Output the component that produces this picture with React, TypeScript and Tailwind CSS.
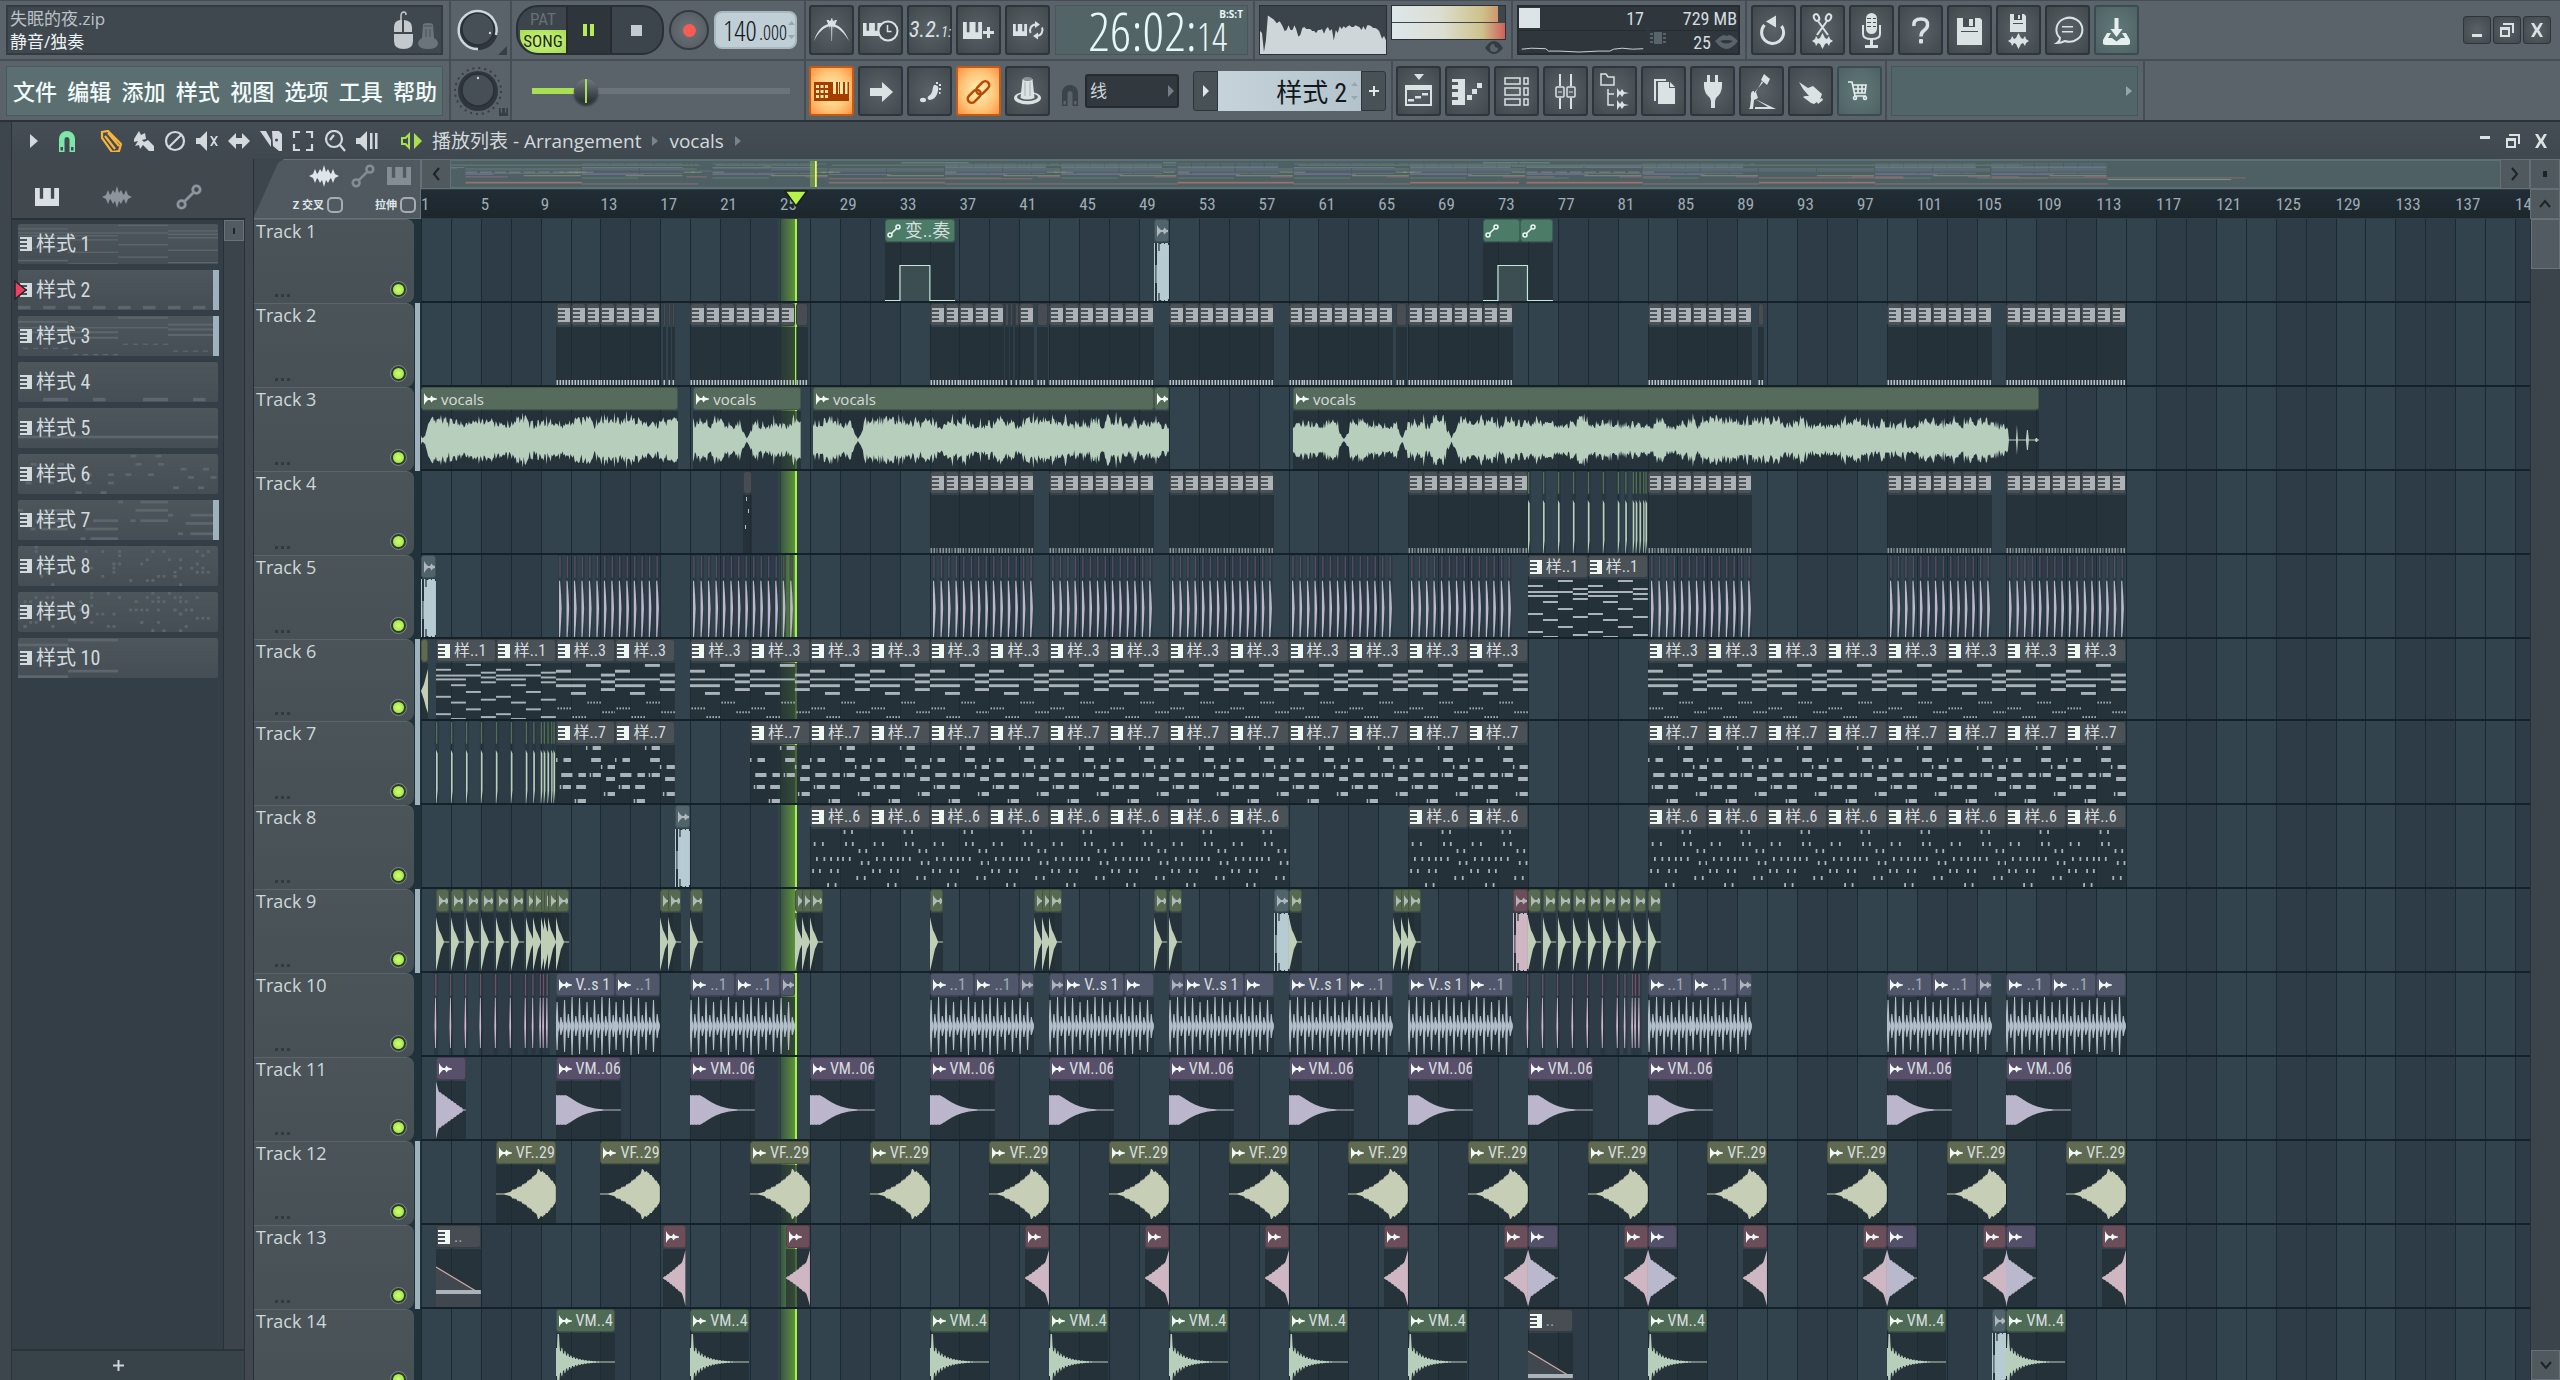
import type { ReactNode } from "react";

/* ------------------------------------------------------------------ */
/* helpers                                                             */
/* ------------------------------------------------------------------ */

const BARS = 141; // bars visible in the playlist
const PX = 15; // drawing units per bar inside the clip svgs
const BODY = 58; // drawing height of a clip body

const NARROW = "[font-family:'Roboto_Condensed',Roboto,'Noto_Sans_CJK_SC',sans-serif]";
const THIN = "[font-family:'Open_Sans_Condensed_Light','Roboto_Condensed','Noto_Sans_CJK_SC',sans-serif]";

const pct = (bars: number) => `${(bars / BARS) * 100}%`;
const steps = (from: number, count: number, by: number) => Array.from({ length: count }, (_, i) => from + i * by);

function noise(seed: number) {
  let s = seed * 9301 + 49297;
  return () => {
    s = (s * 1103515245 + 12345) % 2147483648;
    return s / 2147483648;
  };
}

/** Mirrored envelope: half(x) is half the height at x. */
function envelope(width: number, half: (x: number) => number) {
  const top: string[] = [];
  const bottom: string[] = [];
  for (let x = 0; x <= width; x++) {
    const h = Math.max(0.5, half(x));
    top.push(`${x} ${(BODY / 2 - h).toFixed(1)}`);
    bottom.unshift(`${x} ${(BODY / 2 + h).toFixed(1)}`);
  }
  return `M${top.join("L")}L${bottom.join("L")}Z`;
}

/* ------------------------------------------------------------------ */
/* clip model                                                          */
/* ------------------------------------------------------------------ */

type Tone = "pattern" | "dim" | "auto" | "vocal" | "blue" | "kick" | "drum" | "violet" | "olive" | "rose" | "lilac" | "green";

const HEAD: Record<Tone, string> = {
  pattern: "bg-[#4a5157] border-[#393f44]",
  dim: "bg-[#474d52] border-[#363c41]",
  auto: "bg-[#4a7c67] border-[#3a6352]",
  vocal: "bg-[#566b5b] border-[#44584a]",
  blue: "bg-[#51646b] border-[#3f5058]",
  kick: "bg-[#566a51] border-[#45553f]",
  drum: "bg-[#50576a] border-[#3f4556]",
  violet: "bg-[#58506a] border-[#463f56]",
  olive: "bg-[#5f6a50] border-[#4c553e]",
  rose: "bg-[#6a4f5a] border-[#573f49]",
  lilac: "bg-[#53506a] border-[#424056]",
  green: "bg-[#4f6b56] border-[#3e5645]",
};

const WAVE: Record<Tone, string> = {
  pattern: "fill-[#a9b3b9]",
  dim: "fill-[#a9b3b9]",
  auto: "fill-[#c3e3d5]",
  vocal: "fill-[#b7cebd]",
  blue: "fill-[#b7cbd2]",
  kick: "fill-[#bfceb6]",
  drum: "fill-[#b3becb]",
  violet: "fill-[#bcb6cd]",
  olive: "fill-[#c6ceb5]",
  rose: "fill-[#ceb7c2]",
  lilac: "fill-[#bab8cd]",
  green: "fill-[#b7cfba]",
};

interface ClipData {
  at: number;
  len: number;
  tone: Tone;
  label?: string;
  icon?: "keys" | "wave" | "link" | "none";
  faded?: boolean;
  body?: ReactNode;
}

/* note = [start bar, end bar, y, height] */
type Note = [number, number, number, number];

const NOTES_1: Note[] = [
  [2, 3, 1, 2], [0, 1, 6, 2], [3, 4, 9, 2], [0, 3, 12, 2], [3, 4, 14, 2], [0, 2, 16, 2], [3, 4, 19, 2], [1, 2, 22, 2],
  [2, 3, 29, 2], [0, 1, 34, 2], [3, 4, 37, 2], [1, 2, 40, 2], [2, 3, 47, 2], [0, 1, 52, 2], [3, 4, 55, 2], [1, 2, 57, 2],
];
const dots = (from: number, y: number): Note[] => steps(from, 5, 0.2).map((x) => [x, x + 0.1, y, 2]);
const NOTES_3: Note[] = [
  [2, 3, 1, 3], [0, 1, 7, 3], [3, 4, 11, 3], [0, 3, 16, 2], [3, 4, 18, 3], [0, 2, 22, 3], [3, 4, 26, 3], [1, 2, 30, 3],
  ...dots(2.1, 40), ...dots(0.1, 46), ...dots(3.1, 50), ...dots(1.1, 55),
];
const NOTES_7: Note[] = [
  [2, 2.1, 1, 4], [2.45, 3, 1, 4], [0, 0.1, 13, 4], [0.5, 1, 13, 4], [2.35, 3, 13, 4], [3, 3.1, 20, 4], [3.45, 4, 20, 4],
  [0.35, 1.1, 28, 4], [1.5, 2, 28, 4], [2.25, 2.35, 28, 4], [2.45, 3, 28, 4], [3.35, 4, 32, 4], [0.25, 0.35, 40, 4],
  [0.45, 1, 40, 4], [1.35, 2, 40, 4], [3.2, 3.3, 47, 4], [3.45, 4, 47, 4], [1.25, 1.35, 54, 4], [1.45, 2, 54, 4],
];
const tick = (y: number, ...xs: number[]): Note[] => xs.map((x) => [x, x + 0.12, y, 4]);
const NOTES_6: Note[] = [
  ...tick(1, 2.25, 2.75), ...tick(13, 0.25, 0.8, 2.35, 2.8), ...tick(20, 3.25, 3.7), ...tick(28, 0.4, 0.9, 1.35, 1.8, 2.15, 2.6),
  ...tick(32, 3.4, 3.85), ...tick(40, 0.15, 0.6, 1.35, 1.8), ...tick(47, 3.1, 3.6), ...tick(54, 1.15, 1.65),
];

function Body({ bars, className, children }: { bars: number; className?: string; children: ReactNode }) {
  return (
    <svg className={`h-full w-full ${className ?? ""}`} viewBox={`0 0 ${bars * PX} ${BODY}`} preserveAspectRatio="none" aria-hidden="true">
      {children}
    </svg>
  );
}

function NoteBody({ notes }: { notes: Note[] }) {
  return (
    <Body bars={4} className="fill-[#a9b3b9]">
      {notes.map(([a, b, y, h], i) => (
        <rect key={i} x={a * PX} y={y} width={(b - a) * PX} height={h} />
      ))}
    </Body>
  );
}

const NOTE_SETS: Record<string, Note[]> = { "样..1": NOTES_1, "样..3": NOTES_3, "样..6": NOTES_6, "样..7": NOTES_7 };
const patterns = (label: string, from: number, count: number): ClipData[] =>
  steps(from, count, 4).map((at) => ({ at, len: 4, tone: "pattern", label, icon: "keys", body: <NoteBody notes={NOTE_SETS[label]} /> }));

function TickBody({ bars = 1, tall = 5, faint }: { bars?: number; tall?: number; faint?: boolean }) {
  return (
    <Body bars={bars} className={faint ? "fill-[#8b979d]" : "fill-[#b9c2c7]"}>
      {steps(0.5, Math.floor(bars * 5), 3).map((x, i) => (
        <rect key={x} x={x} y={BODY - tall} width={faint && i % 3 === 2 ? 1 : 1.6} height={tall} />
      ))}
    </Body>
  );
}
const minis = (from: number, count: number, faint = false): ClipData[] =>
  steps(from, count, 1).map((at) => ({ at, len: 1, tone: "pattern", icon: "keys", faded: true, body: <TickBody faint={faint} /> }));
const sliver = (at: number, len: number): ClipData => ({ at, len, tone: "dim", icon: "none", body: <TickBody bars={len} /> });

/* audio shapes */

function VocalBody({ bars, seed, dips = [], tail }: { bars: number; seed: number; dips?: number[]; tail?: number }) {
  const rnd = noise(seed);
  let slow = 0.75;
  const d = envelope(Math.round(bars * PX), (x) => {
    const bar = x / PX;
    slow += (rnd() - 0.5) * 0.3;
    slow = Math.min(0.95, Math.max(0.6, slow));
    let h = 24 * slow * (0.7 + rnd() * 0.4);
    if (rnd() > 0.9) h += 5;
    for (const dip of dips) {
      const away = Math.abs(bar - dip);
      if (away < 0.35) h *= 0.08 + away * 1.6;
    }
    if (tail !== undefined && bar > tail) {
      const t = bar - tail;
      return Math.abs(t - 0.6) < 0.06 ? 15 : Math.abs(t - 1.3) < 0.06 ? 10 : Math.abs(t - 1.9) < 0.08 ? 2 : 0.5;
    }
    return h;
  });
  return <Body bars={bars} className={WAVE.vocal}><path d={d} /></Body>;
}

const vocal = (at: number, end: number, seed: number, dips?: number[], tail?: number, label = "vocals"): ClipData => ({
  at, len: end - at, tone: "vocal", icon: "wave", label, body: <VocalBody bars={end - at} seed={seed} dips={dips} tail={tail} />,
});

const sweep = (at: number, tone: Tone = "blue"): ClipData => ({
  at, len: 1, tone, icon: "wave", faded: true,
  body: (
    <Body bars={1} className={WAVE[tone]}>
      <path d="M0 0h1v58h-1zM1.600 22h1v18h-1zM3 0h1.400v58h-1.400zM4.400 8h1.200v42h-1.200zM5.600 1h2v56h-2zM7.400 0h2.600v58h-2.600zM10 1h1v56h-1zM11 0h3v58h-3zM14 2h1v54h-1z" />
    </Body>
  ),
});

const kick = (at: number): ClipData => ({
  at, len: 0.87, tone: "kick", icon: "wave", faded: true,
  body: (
    <Body bars={0.87} className={WAVE.kick}>
      <path d="M0 4L1.5 11L3 17L5 21L8 28.500H13V29.500H8L6.500 33L5 36L3 45L1 54L0 58Z" />
    </Body>
  ),
});

const DRUM_HITS = [28, 11, 24, 9, 26, 12, 29, 10];
const drum = (at: number, len: number, label?: string): ClipData => ({
  at, len, tone: "drum", icon: "wave", label, faded: len === 1,
  body: (
    <Body bars={len} className={WAVE.drum}>
      <rect x="0" y={BODY / 2 - 0.5} width={len * PX} height="1" />
      {steps(0, Math.round(len * 4), PX / 4).map((x, i) => {
        const h = DRUM_HITS[(i + Math.round(at) * 2) % 8];
        return <path key={x} d={`M${x} ${29 - h * 0.4}L${x + 0.6} ${29 - h}h1L${x + 2.4} 24L${x + 3.7} 27V31L${x + 2.4} 35L${x + 1.6} ${29 + h}h-1L${x} ${29 + h * 0.4}Z`} />;
      })}
    </Body>
  ),
});

const PAD = envelope(65, (x) => (x < 9 ? 15 - (x % 3) * 0.3 : 15 * Math.exp(-Math.pow((x - 9) / 17, 1.4))));
const pad = (at: number): ClipData => ({
  at, len: 4.35, tone: "violet", icon: "wave", label: "VM..06",
  body: <Body bars={4.35} className={WAVE.violet}><path d={PAD} /></Body>,
});

const FALL = envelope(30, (x) => (x < 3 ? 29 - x * 4 : Math.max(0.5, 18 - (x - 3) * 0.72 + (x % 3) * 0.5)));
const fall = (at: number, tone: Tone = "lilac"): ClipData => ({
  at, len: 2, tone, icon: "wave", body: <Body bars={2} className={WAVE[tone]}><path d={FALL} /></Body>,
});

const RISE = envelope(24, (x) => (x < 20 ? Math.pow(x / 20, 1.15) * 15 + (x % 3) * 0.5 : 15 + Math.pow((x - 20) / 4, 1.2) * 13));
const rise = (at: number, end: number): ClipData => ({
  at, len: end - at, tone: "rose", icon: "wave", body: <Body bars={1.6} className={WAVE.rose}><path d={RISE} /></Body>,
});

const SWELL = envelope(60, (x) => {
  const jag = ((x * 7) % 5) * 0.5;
  if (x < 42) return Math.pow(x / 42, 2.1) * 21 + (x > 14 ? jag : 0);
  if (x < 44) return 25;
  return 22 - Math.pow((x - 44) / 16, 1.6) * 15 + jag;
});
const swell = (at: number): ClipData => ({
  at, len: 4, tone: "olive", icon: "wave", label: "VF..29", body: <Body bars={4} className={WAVE.olive}><path d={SWELL} /></Body>,
});

const PLUCK = envelope(118, (x) => {
  const t = x / 2;
  if (t < 1.5) return 14;
  if (t < 3.5) return 28;
  return 17 * Math.exp(-(t - 3) / 12) * (Math.round(x / 3) % 2 ? 0.72 : 1.05);
});
const pluck = (at: number): ClipData => ({
  at, len: 3.95, tone: "green", icon: "wave", label: "VM..4",
  body: (
    <svg className={`h-full w-full ${WAVE.green}`} viewBox={`0 0 118 ${BODY}`} preserveAspectRatio="none" aria-hidden="true">
      <path d={PLUCK} />
    </svg>
  ),
});

const ramp = (at: number): ClipData => ({
  at, len: 3, tone: "dim", icon: "keys", label: "..",
  body: (
    <Body bars={3}>
      <path d="M0 18L39 42H45V58H0Z" fill="#41474e" />
      <path d="M0 18L40 42" stroke="#d3a9ab" strokeWidth="1.200" fill="none" />
      <rect x="0" y="41" width="45" height="4" fill="#a9b3b9" />
    </Body>
  ),
});

function StepBody({ bars, up, down }: { bars: number; up: number; down: number }) {
  const a = up * PX;
  const b = down * PX;
  return (
    <Body bars={bars}>
      <rect x={a} y="22" width={b - a} height="36" fill="#3c4e52" />
      <path d={`M0 57.500H${a}V22.500H${b}V57.500H${bars * PX}`} fill="none" stroke="#c3e8da" strokeWidth="1.200" />
    </Body>
  );
}

/* ------------------------------------------------------------------ */
/* very short clips drawn as thin columns                              */
/* ------------------------------------------------------------------ */

interface SpikeData {
  from: number;
  to: number;
  at: number[];
  head: string;
  wave: string;
  cap: string;
}

const violetSpikes = (from: number, to: number): SpikeData => ({
  from, to, at: steps(from + 0.22, Math.round((to - from) * 2), 0.5), head: "#5a4d68", wave: "#bdb7cd", cap: "M-0.300 26H0.800L1.800 40L2.400 54L1.800 68L0.800 83H-0.300Z",
});
const greenSpikes = (from: number): SpikeData => ({
  from, to: from + 8, at: [0, 1, 2, 3, 4, 5, 6, 6.5, 7, 7.2, 7.45, 7.7, 7.85].map((b) => from + b), head: "#55714f", wave: "#bad1b9", cap: "M0 29L1.700 33V70L0.500 83H0Z",
});
const roseSpikes = (from: number): SpikeData => ({
  from, to: from + 8, at: [0.92, 1.92, 2.92, 3.92, 4.92, 5.92, 6.92, 7.42, 7.92, 8.12, 8.37].map((b) => from + b - 1 + 0.02), head: "#755169", wave: "#d2b5ca", cap: "M0 25L0.800 25L1.200 54L0.800 76H0L-0.600 54Z",
});

function Spikes({ from, to, at, head, wave, cap }: SpikeData) {
  return (
    <svg
      className="absolute inset-y-0 h-full"
      style={{ left: pct(from), width: pct(to - from) }}
      viewBox={`0 0 ${(to - from) * PX} 83`}
      preserveAspectRatio="none"
      overflow="visible"
      aria-hidden="true"
    >
      {at.map((bar) => (
        <g key={bar} transform={`translate(${(bar - from) * PX} 0)`}>
          <rect x="-1" y="0" width="4" height="83" fill="#22303a" opacity="0.500" />
          <rect x="0" y="1" width="1.300" height="22" fill={head} />
          <path d={cap} fill={wave} />
        </g>
      ))}
    </svg>
  );
}

/* ------------------------------------------------------------------ */
/* tracks                                                              */
/* ------------------------------------------------------------------ */

interface TrackData {
  clips: ClipData[];
  spikes?: SpikeData[];
  marked?: boolean;
  mini: string;
}

const TRACKS: TrackData[] = [
  {
    mini: "#6fa58f",
    clips: [
      { at: 31, len: 4.7, tone: "auto", icon: "link", label: "变..奏", body: <StepBody bars={4.7} up={1} down={3} /> },
      sweep(49),
      { at: 71, len: 2.5, tone: "auto", icon: "link", body: <StepBody bars={2.5} up={1} down={2.6} /> },
      { at: 73.5, len: 2.2, tone: "auto", icon: "link", body: <StepBody bars={2.2} up={-1} down={0.5} /> },
    ],
  },
  {
    mini: "#667981",
    marked: true,
    clips: [
      ...minis(9, 7), sliver(16.2, 0.2), sliver(16.5, 0.2), sliver(16.8, 0.2),
      ...minis(18, 7), sliver(25.1, 0.8),
      ...minis(34, 5), sliver(39.05, 0.25), sliver(39.35, 0.25), sliver(39.7, 0.25), ...minis(40, 1), sliver(41.2, 0.7),
      ...minis(42, 7), ...minis(50, 7), ...minis(58, 7), sliver(65.2, 0.7), ...minis(66, 7),
      ...minis(82, 7), sliver(89.4, 0.4), ...minis(98, 7), ...minis(106, 8),
    ],
  },
  {
    mini: "#6f8a72",
    marked: true,
    clips: [
      vocal(0, 17.2, 3, [0.1]),
      vocal(18.2, 25.4, 11, [21.8 - 18.2]),
      vocal(26.2, 49, 23, [3]),
      vocal(49, 50, 31, undefined, undefined, ""),
      vocal(58.3, 108.2, 47, [3.4, 7.3, 10.6], 47.8),
    ],
  },
  {
    mini: "#6d7f84",
    clips: [
      {
        at: 21.5, len: 0.6, tone: "dim", icon: "none",
        body: <Body bars={0.6} className="fill-[#b9c2c7]"><rect x="3" y="2" width="1" height="4" /><rect x="5" y="14" width="1" height="4" /><rect x="2" y="30" width="1" height="4" /></Body>,
      },
      ...minis(34, 7, true), ...minis(42, 7, true), ...minis(50, 7, true), ...minis(66, 8, true),
      ...minis(82, 7, true), ...minis(98, 7, true), ...minis(106, 8, true),
    ],
    spikes: [greenSpikes(74)],
  },
  {
    mini: "#76829a",
    clips: [sweep(0), ...patterns("样..1", 74, 2)],
    spikes: [[9, 16], [18, 25], [34, 41], [42, 49], [50, 57], [58, 65], [66, 73], [82, 89], [98, 105], [106, 114]].map(([a, b]) => violetSpikes(a, b)),
  },
  {
    mini: "#64777f",
    marked: true,
    clips: [
      {
        at: 0, len: 0.5, tone: "olive", icon: "none",
        body: <Body bars={0.5} className={WAVE.olive}><path d="M0 29L3 22L5 14L7 6V52L5 46L3 38Z" /></Body>,
      },
      ...patterns("样..1", 1, 2), ...patterns("样..3", 9, 2), ...patterns("样..3", 18, 14), ...patterns("样..3", 82, 8),
    ],
  },
  {
    mini: "#667981",
    marked: true,
    clips: [...patterns("样..7", 9, 2), ...patterns("样..7", 22, 13), ...patterns("样..7", 82, 8)],
    spikes: [greenSpikes(1)],
  },
  {
    mini: "#667981",
    clips: [sweep(17), ...patterns("样..6", 26, 8), ...patterns("样..6", 66, 2), ...patterns("样..6", 82, 8)],
  },
  {
    mini: "#8a9c78",
    marked: true,
    clips: [
      ...[1, 2, 3, 4, 5, 6, 7, 7.5, 8, 8.2, 8.5, 9, 16, 16.5, 18, 25, 25.5, 26, 34, 41, 41.5, 42, 49, 50].map(kick),
      sweep(57), ...[58, 65, 65.5, 66].map(kick), sweep(73, "rose"), ...steps(74, 9, 1).map(kick),
    ],
  },
  {
    mini: "#77759a",
    clips: [
      drum(9, 4, "V..s 1"), drum(13, 3, "..1"), drum(18, 3, "..1"), drum(21, 3, "..1"), drum(24, 1),
      drum(34, 3, "..1"), drum(37, 3, "..1"), drum(40, 1), drum(42, 1), drum(43, 4, "V..s 1"), drum(47, 2),
      drum(50, 1), drum(51, 4, "V..s 1"), drum(55, 2), drum(58, 4, "V..s 1"), drum(62, 3, "..1"),
      drum(66, 4, "V..s 1"), drum(70, 3, "..1"), drum(82, 3, "..1"), drum(85, 3, "..1"), drum(88, 1),
      drum(98, 3, "..1"), drum(101, 3, "..1"), drum(104, 1), drum(106, 3, "..1"), drum(109, 3, "..1"), drum(112, 2),
    ],
    spikes: [roseSpikes(1), roseSpikes(74)],
  },
  { mini: "#77759a", clips: [fall(1, "violet"), ...[9, 18, 26, 34, 42, 50, 58, 66, 74, 82, 98, 106].map(pad)] },
  { mini: "#93a07a", marked: true, clips: [5, 12, 22, 30, 38, 46, 54, 62, 70, 78, 86, 94, 102, 110].map(swell) },
  {
    mini: "#9c7387",
    marked: true,
    clips: [
      ramp(1), rise(16.2, 17.7),
      ...[24.4, 40.4, 48.4, 56.4, 64.4, 72.4, 80.4, 88.4, 96.4, 104.4, 112.4].map((at) => rise(at, Math.ceil(at) + 1)),
      ...[74, 82, 98, 106].map((at) => fall(at)),
    ],
  },
  { mini: "#6b8a75", clips: [...[9, 18, 34, 42, 50, 58, 66].map(pluck), ramp(74), pluck(82), pluck(98), sweep(105), pluck(106)] },
];

/* ------------------------------------------------------------------ */
/* icons                                                               */
/* ------------------------------------------------------------------ */

function Svg({ w, h, className = "", children }: { w: number; h: number; className?: string; children: ReactNode }) {
  return (
    <svg width={w} height={h} viewBox={`0 0 ${w} ${h}`} className={`shrink-0 ${className}`} fill="currentColor" aria-hidden="true">
      {children}
    </svg>
  );
}

const KeysIcon = () => (
  <Svg w={12} h={14}>
    <path d="M0 0H12V14H0V12H7V10H0V8H7V6H0V4H7V2H0Z" />
  </Svg>
);

const WaveIcon = () => (
  <Svg w={14} h={12}>
    <path d="M1 0L2.500 2.500L5 5L7 5L8.500 2.500L10 4.500L14 5.500V6.500L10 7.500L8.500 9.500L7 7L5 7L2.500 9.500L1 12Z" />
  </Svg>
);

const LinkDots = ({ size = 14 }: { size?: number }) => (
  <svg width={size} height={size} viewBox="0 0 14 14" className="shrink-0" fill="none" stroke="currentColor" strokeWidth="1.500" aria-hidden="true">
    <circle cx="3" cy="11" r="2" />
    <circle cx="11" cy="3" r="2" />
    <path d="M4.700 9.300L9.300 4.700" />
  </svg>
);

const PianoIcon = ({ x = 0, y = 0, w = 24, h = 20 }: { x?: number; y?: number; w?: number; h?: number }) => (
  <path
    d={`M${x} ${y}h${w * 0.2}v${h * 0.6}h${w * 0.14}v${-h * 0.6}h${w * 0.32}v${h * 0.6}h${w * 0.14}v${-h * 0.6}h${w * 0.2}v${h}h${-w}z`}
  />
);

const BurstIcon = ({ size = 30 }: { size?: number }) => (
  <svg width={size} height={22} viewBox="0 0 30 22" className="shrink-0" fill="currentColor" aria-hidden="true">
    <path d="M0 11L4 9L6 4L8 9L9 8L11 4L13 7L15 0L17 7L19 4L21 8L22 9L24 4L26 9L30 11L26 13L24 18L22 13L21 14L19 18L17 15L15 22L13 15L11 18L9 14L8 13L6 18L4 13Z" />
  </svg>
);

const MagnetShape = () => <path d="M1 22V9a8 8 0 0 1 16 0V22H11.500V9.500a2.500 2.500 0 0 0 -5 0V22Z M2.500 17v3.500H5V17ZM13 17v3.500h2.500V17Z" fillRule="evenodd" />;

const ICONS: Record<string, ReactNode> = {
  metronome: (
    <>
      <path d="M5 36C8 25 15 19 22 18.500C29 19 36 25 40 36C35 28 29 21.500 22 21C15 21.500 9 28 5 36Z" />
      <path d="M22 13.500h1.500L23 36h-.5zM17.500 15l2.500 0l1 9zM28 15l-2.500 0l-1 9z" />
      <circle cx="22.600" cy="18.500" r="3.200" />
    </>
  ),
  waitInput: (
    <>
      <PianoIcon x={5} y={18} w={18} h={13} />
      <circle cx="30" cy="26" r="9.500" fill="#444c51" stroke="currentColor" strokeWidth="2" />
      <path d="M29.500 20v6.500h4" fill="none" stroke="currentColor" strokeWidth="1.500" />
    </>
  ),
  overdub: (
    <>
      <PianoIcon x={7} y={17} w={19} h={17} />
      <path d="M31 22h3v4h4v3h-4v4h-3v-4h-4v-3h4z" />
    </>
  ),
  loopRec: (
    <>
      <PianoIcon x={8} y={19} w={14} h={12} />
      <path d="M25.500 28a6 6 0 0 1 5 -8.500M37 22.500a6 6 0 0 1 -5 8.500" fill="none" stroke="currentColor" strokeWidth="2" />
      <path d="M30 16l5 3.500l-5 3.500zM33 27.500v7l-5 -3.500z" />
    </>
  ),
  stepEdit: (
    <>
      <path d="M5 16h17v19H5z" fill="#a53c00" />
      <path d="M7 19h3v3H7zM11.500 19h3v3h-3zM16 19h3v3h-3zM7 24h3v3H7zM11.500 24h3v3h-3zM16 24h3v3h-3zM7 29h3v3H7zM11.500 29h3v3h-3zM16 29h3v3h-3z" fill="#ffe3a0" />
      <path d="M21 16h19v19H21z" fill="#a53c00" />
      <path d="M24 16h3v12h-3zM29 16h1v12h-1zM31 16h3v12h-3zM36 16h2.500v12H36z" fill="#ffe3a0" />
    </>
  ),
  arrow: <path d="M12 22h12v-6l11 10l-11 10v-6H12z" />,
  glide: (
    <>
      <path d="M27 19c4 0 5 2 4 6c-1 5 -4 9 -9 9c-2 -2 -2 -3 1 -5c3 -2 2 -7 4 -10z" />
      <ellipse cx="16" cy="34" rx="3" ry="2.200" />
      <path d="M29 16h2v2h-2zM32 18h2v2h-2zM32 22h2v2h-2zM32 26h1.500v2h-1.500z" />
    </>
  ),
  link: (
    <g transform="rotate(-45 22.500 26)" fill="none" stroke="#b84a05" strokeWidth="2.500">
      <rect x="9" y="22" width="15" height="8" rx="4" />
      <rect x="21" y="22" width="15" height="8" rx="4" />
    </g>
  ),
  hat: (
    <>
      <ellipse cx="22.500" cy="32" rx="13.500" ry="6.500" />
      <ellipse cx="22.500" cy="31" rx="10.500" ry="4" fill="#555e63" />
      <path d="M17.500 13h10l2 19q-7 3 -14 0z" />
      <ellipse cx="22.500" cy="13" rx="4.500" ry="2" fill="#8a9398" />
      <path d="M20 16v14M25 16v14" stroke="#a5aeb3" strokeWidth="1" />
    </>
  ),
  undo: (
    <>
      <path d="M13.500 20a11 11 0 1 0 17 1" fill="none" stroke="currentColor" strokeWidth="3" />
      <path d="M15 16.500L25 10.500V22.500Z" />
    </>
  ),
  cut: (
    <>
      <g fill="none" stroke="currentColor" strokeWidth="2">
        <ellipse cx="16.500" cy="12.500" rx="2.500" ry="3.500" transform="rotate(-25 16.500 12.500)" />
        <ellipse cx="28.500" cy="12.500" rx="2.500" ry="3.500" transform="rotate(25 28.500 12.500)" />
        <path d="M18 16L28 30M27 16L17 30" />
      </g>
      <path d="M12 36l3 -2l1 -3l2 3l2 -1l2.500 -5l2.500 5l2 1l2 -3l1 3l3 2l-3 2l-1 3l-2 -3l-2 1l-2.500 5l-2.500 -5l-2 -1l-2 3l-1 -3z" />
    </>
  ),
  mic: (
    <>
      <rect x="17" y="8" width="11" height="21" rx="5.500" />
      <path d="M18 13h4v1h-4zM18 17h4v1h-4zM18 21h4v1h-4zM24 13h3v1h-3zM24 17h3v1h-3zM24 21h3v1h-3z" fill="#4a5257" />
      <path d="M14 20v9q0 5 8.500 5q8.500 0 8.500 -5v-9" fill="none" stroke="currentColor" strokeWidth="2" />
      <path d="M21 34h3v6h5v3H16v-3h5z" />
    </>
  ),
  help: (
    <>
      <path d="M16 21q-1 -7 7 -7q7 0 6.500 6q0 3 -3.500 5.500q-3 2 -3 6" fill="none" stroke="currentColor" strokeWidth="3.500" />
      <rect x="21" y="34" width="4" height="4.500" rx="1" />
    </>
  ),
  save: (
    <>
      <path d="M10 13h23l2 2v25H10z" />
      <path d="M16 13h12v9H16zM14 26h17v1H14z" fill="#474f54" />
      <path d="M22 14h4v7h-4z" />
    </>
  ),
  saveNew: (
    <>
      <path d="M14 9h14l2 2v16H14z" />
      <path d="M18 9h8v6h-8zM17 18h10v1H17z" fill="#474f54" />
      <path d="M22 10h2v4h-2z" />
      <path d="M12 36l3 -2l1 -3l2 3l2 -1l2.500 -5l2.500 5l2 1l2 -3l1 3l3 2l-3 2l-1 3l-2 -3l-2 1l-2.500 5l-2.500 -5l-2 -1l-2 3l-1 -3z" />
    </>
  ),
  chat: (
    <>
      <path d="M12 38q3 -2 3 -5a13 12 0 1 1 5 3q-4 2 -8 2z" fill="none" stroke="currentColor" strokeWidth="2" />
      <path d="M17 21h11v1.500H17zM17 26h11v1.500H17z" />
    </>
  ),
  download: (
    <>
      <path d="M20.500 13h4v11h4l-6 8l-6 -8h4z" />
      <path d="M13 28h4l-3 5h4l4.500 3.500l4.500 -3.500h4l-3 -5h4l4 7v4l-2 1H11l-2 -1v-4z" />
    </>
  ),
  playlist: (
    <>
      <path d="M18 8h10l-5 6z" />
      <path d="M9 19h27v21H9zM11 24v14h23V24z" fillRule="evenodd" />
      <path d="M12 33h6v2.500h-6zM19 30h6v2.500h-6zM26 27h6v2.500h-6z" />
    </>
  ),
  pianoRoll: (
    <>
      <path d="M7 13h13v26H7v-5h6v-3H7v-5h6v-3H7v-4h6v-3H7z" />
      <path d="M22 29h5v5h-5zM27 23h5v5h-5zM32 17h5v5h-5z" />
    </>
  ),
  rack: (
    <g fill="none" stroke="currentColor" strokeWidth="1.500">
      <path d="M11 12h15v6H11zM30 12h4v6h-4zM11 22h15v7H11zM30 22h4v7h-4zM11 33h15v6H11zM30 33h4v6h-4z" />
    </g>
  ),
  mixer: (
    <>
      <path d="M16 8h2v12h-2zM27 8h2v12h-2zM16 32h2v11h-2zM27 32h2v11h-2z" />
      <g fill="none" stroke="currentColor" strokeWidth="1.500">
        <rect x="13" y="21" width="8" height="10" rx="1" />
        <rect x="24" y="21" width="8" height="10" rx="1" />
      </g>
      <path d="M15 25.500h4v1h-4zM26 25.500h4v1h-4z" />
    </>
  ),
  browser: (
    <>
      <path d="M9 8h5l2 3h6v8H9z" fill="none" stroke="currentColor" strokeWidth="1.500" />
      <path d="M16 23v16h6M16 28h6" fill="none" stroke="currentColor" strokeWidth="1.500" />
      <path d="M25 22l3 4l2 -3l2 3l5 1l-5 1l-2 3l-2 -3l-3 4zM25 34l3 4l2 -3l2 3l5 1l-5 1l-2 3l-2 -3l-3 4z" />
    </>
  ),
  copy: (
    <>
      <path d="M13 13h12v2H15v20h-2z" />
      <path d="M17 16h11v6h6v16H17z" />
      <path d="M29 16l5 5h-5z" />
    </>
  ),
  plug: <path d="M17 9h3v7h5V9h3v7h4v4q0 7 -6 12l-1 3v7h-4v-7l-1 -3q-6 -5 -6 -12v-4h3z" />,
  tempoTap: (
    <>
      <path d="M25 8l6 5l-3 6l-6 -5z" />
      <path d="M23 15l1 1.500L15 27V25Q11 24 12 33L11 41L10 43H14L15 34L19 32L17 26z" />
      <path d="M16 33l21 10H16v-2h13z" />
    </>
  ),
  touch: <path d="M11 16l9 6l5 -2l9 8l-2 6l-6 4l-3 -1l-8 -6l2 -1l4 0l-6 -7zM29 36l5 -4l1 2l-5 4z" />,
  cart: (
    <g fill="none" stroke="currentColor" strokeWidth="1.600">
      <path d="M11 16h4l3 14h11M16 19h13l-1 8H17M17 23h12M21 19v8M25 19v8" />
      <circle cx="18" cy="32" r="1.500" />
      <circle cx="28" cy="32" r="1.500" />
    </g>
  ),
};

const NORMAL = "border-[#2d363a] bg-[radial-gradient(#596267,#41494d)] text-[#dbe2e4]";
const LIT = "border-[#c75a10] bg-[radial-gradient(#fff3b5,#ffc477_60%,#fd9142)] text-[#b84a05]";
const TEAL = "border-[#3a4c50] bg-[radial-gradient(#627a79,#4e6264)] text-[#e6eff0]";

function ToolButton({ name, title, look = NORMAL }: { name: string; title: string; look?: string }) {
  return (
    <button title={title} aria-label={title} className={`h-[50px] w-[45px] shrink-0 rounded-[3px] border-2 ${look}`}>
      <svg viewBox="0 0 45 50" className="-m-[2px] h-[50px] w-[45px]" fill="currentColor" aria-hidden="true">{ICONS[name]}</svg>
    </button>
  );
}

/* ------------------------------------------------------------------ */
/* top toolbar                                                         */
/* ------------------------------------------------------------------ */

const GROUP = "flex h-full shrink-0 items-center border-r-2 border-[#454e55]";

function Knob({ ring }: { ring: boolean }) {
  return (
    <button aria-label={ring ? "Master volume" : "Master pitch"} className="h-[50px] w-[58px]">
      <svg viewBox="0 0 58 50" className="h-[50px] w-[58px]" aria-hidden="true">
        {!ring && <circle cx="26" cy="25" r="23" fill="none" stroke="#363f45" strokeWidth="2" strokeDasharray="2 4" />}
        <circle cx="26" cy="25" r="20" fill="#2f373d" />
        <circle cx="26" cy="24" r="16" fill="#454f55" stroke="#283036" strokeWidth="1.500" />
        {ring && <path d="M26 44A19 19 0 1 1 44 30" fill="none" stroke="#cbd7da" strokeWidth="2.500" />}
        {ring ? <circle cx="38" cy="28" r="1.200" fill="#cbd7da" /> : <circle cx="26" cy="12" r="1.200" fill="#cbd7da" />}
        {ring ? <path d="M55 41V50H46Z" fill="#363f45" /> : <g fill="#363f45"><PianoIcon x={47} y={42} w={9} h={8} /></g>}
      </svg>
    </button>
  );
}

function WindowButtons({ boxed }: { boxed?: boolean }) {
  const box = boxed ? "h-[28px] w-[28px] rounded-[3px] border border-[#2d363a] bg-[radial-gradient(#596267,#41494d)]" : "h-[28px] w-[28px]";
  return (
    <div className={`flex text-[#dbe2e4] ${boxed ? "gap-[2px]" : ""}`}>
      <button aria-label="Minimize" className={`flex items-center justify-center ${box}`}>
        <Svg w={16} h={16}>{boxed ? <path d="M3 12h10v3H3z" /> : <path d="M3 3h10v3H3z" />}</Svg>
      </button>
      <button aria-label="Restore" className={`flex items-center justify-center ${box}`}>
        <Svg w={16} h={16}>
          <path d="M1 5h10v10H1zM3 8v5h6V8zM4 1h11v10h-2V3H4z" fillRule="evenodd" />
        </Svg>
      </button>
      <button aria-label="Close" className={`flex items-center justify-center ${box}`}>
        <Svg w={16} h={16}><path d="M2 1h3l3 5l3 -5h3l-4 7l4 7h-3l-3 -5l-3 5H2l4 -7z" /></Svg>
      </button>
    </div>
  );
}

const rndSpec = noise(5);
const SPECTRUM = `M0 50V26L2 28L4 48L6 36L8 10L14 14L17 18L20 16L${steps(23, 50, 2)
  .map((x) => `${x} ${(19 + rndSpec() * 7 + (x === 39 || x === 41 || x === 75 ? 7 : 0) + (x > 45 && x < 80 ? 3 : 0)).toFixed(0)}`)
  .join("L")}L124 34L126 31L128 36V50Z`;

function Spinner() {
  return (
    <Svg w={9} h={18} className="text-[#98a7ae]"><path d="M4.500 0L8 4H1ZM4.500 18L1 14H8Z" /></Svg>
  );
}

function TopRow() {
  return (
    <div className="flex h-[60px] items-center border-b-2 border-[#454e55]">
      <div className={`${GROUP} w-[451px] px-[6px]`}>
        <div className="flex h-[50px] w-full items-center border-2 border-[#343c42] bg-[#40484f] px-[2px]">
          <p className="flex-1 text-[17px] leading-[23px] text-[#b9c1c6]">
            失眠的夜.zip
            <span className="block text-[#eef3f5]">静音/独奏</span>
          </p>
          <Svg w={48} h={40} className="text-[#c3c9cc]">
            <path d="M10 10V6q0 -4 3 -4q2 0 2 3" fill="none" stroke="currentColor" strokeWidth="1.500" />
            <path d="M3 22v-5q0 -6 6 -7h2v12zM13 10q8 1 8 7v5h-8zM3 24h19v7q0 8 -9.500 8t-9.500 -8z" />
            <path d="M32 15q0 -2 5 -2t5 2l1 13q4 2 4 6q-1 5 -10 5t-10 -5q0 -4 4 -6z" fill="#6b747a" />
            <path d="M33 16h8M35 19v8M39 19v8" stroke="#535c62" strokeWidth="1.500" />
          </Svg>
        </div>
      </div>
      <div className={`${GROUP} w-[61px] pl-px`}><Knob ring /></div>
      <div className={`${GROUP} w-[294px] gap-[5px] pl-[4px]`}>
        <div className="flex h-[50px] w-[148px] overflow-hidden rounded-[22px] border-2 border-[#2a3136] bg-[#3c454b]">
          <button className={`flex w-[48px] flex-col pl-[2px] ${NARROW}`}>
            <span className="block h-[23px] w-full text-center text-[17px] leading-[25px] text-[#677076]">PAT</span>
            <span className="block h-[23px] w-full rounded-bl-[18px] bg-[radial-gradient(#d0f58a,#a5dc4e)] text-center text-[17px] leading-[22px] text-[#1c2a10]">SONG</span>
          </button>
          <button aria-label="Pause" className="flex w-[46px] items-center justify-center border-x-2 border-[#262c31] bg-[#2e353b] text-[#b4ee56]">
            <Svg w={12} h={12}><path d="M0 0h4v12H0zM7 0h4v12H7z" /></Svg>
          </button>
          <button aria-label="Stop" className="flex flex-1 items-center justify-center pr-[2px] text-[#c4cbd0]">
            <Svg w={11} h={11}><path d="M0 0h11v11H0z" /></Svg>
          </button>
        </div>
        <button aria-label="Record" className="flex h-[40px] w-[40px] items-center justify-center rounded-full border-2 border-[#343b40] bg-[radial-gradient(#6d757b,#4f575d)]">
          <span className="h-[13px] w-[13px] rounded-full bg-[#fb5a55]" />
        </button>
        <div className={`flex h-[38px] w-[83px] items-center rounded-[8px] border-2 border-[#a9b8bf] bg-[#c0ced5] text-[#11181c] ${THIN}`}>
          <label className="sr-only" htmlFor="tempo">Tempo</label>
          <input id="tempo" defaultValue="140" className="h-[34px] w-[43px] bg-transparent pl-[7px] text-[28px] leading-[34px]" />
          <span className="pt-[6px] text-[20px] leading-[28px]">.000</span>
          <Spinner />
        </div>
      </div>
      <div className={`${GROUP} w-[449px] gap-[4px] pl-[3px]`}>
        <ToolButton name="metronome" title="Metronome" />
        <ToolButton name="waitInput" title="Wait for input" />
        <button title="Countdown" className={`h-[50px] w-[45px] shrink-0 rounded-[3px] border-2 text-[22px] italic leading-[46px] ${NORMAL} ${NARROW}`}>3.2.<span className="text-[14px]">1:</span></button>
        <ToolButton name="overdub" title="Overdub" />
        <ToolButton name="loopRec" title="Loop recording" />
        <div className="ml-px flex h-[50px] w-[193px] justify-end border border-[#46565a] bg-[#536467] pr-[4px] text-[#e8f7f7]">
          <div className={`-mt-[12px] flex items-baseline ${THIN}`}>
            <span className="text-[54px] leading-[72px]">26:02:</span>
            <span className="text-[38px] leading-[52px]">14</span>
          </div>
          <span className="-ml-[8px] mt-[2px] text-[10px] font-bold leading-[13px]">B:S:T</span>
        </div>
      </div>
      <div className={`${GROUP} w-[258px] gap-[4px] pl-[4px]`}>
        <div className="h-[50px] w-[128px] border border-[#2b3237] bg-[#3b444a]">
          <svg viewBox="0 0 128 50" preserveAspectRatio="none" className="h-full w-full fill-[#ced6d9]" aria-hidden="true"><path d={SPECTRUM} /></svg>
        </div>
        <div className="flex h-[50px] w-[115px] flex-col">
          <div className="flex h-[35px] flex-col gap-px border border-[#2b3237] bg-[#3d464c]">
            <div className="h-[16px] w-[106px] bg-[linear-gradient(to_right,#dde6ea,#dcded2_45%,#cec18a_85%,#cf966e)]" />
            <div className="h-[16px] w-[113px] bg-[linear-gradient(to_right,#dde6ea,#dcded2_45%,#cec18a_80%,#d0605a)]" />
          </div>
          <Svg w={18} h={14} className="ml-auto mr-[3px] text-[#343c41]">
            <path d="M0 8Q9 -6 18 8Q9 20 0 8ZM9 4a4 4 0 1 0 4 4l-3 -1z" fillRule="evenodd" />
          </Svg>
        </div>
      </div>
      <div className={`${GROUP} w-[234px] pl-[4px] ${NARROW}`}>
        <div className="grid h-[50px] w-[223px] grid-cols-[127px_1fr] grid-rows-2 gap-x-[4px] border-2 border-[#262c31] bg-[#2f373c] text-[18px] leading-[23px] text-[#d5dce0]">
          <div className="flex justify-between pr-[2px]"><span className="mt-px h-[20px] w-[21px] bg-[#dde4e8]" />17</div>
          <div className="pr-px text-right">729 MB</div>
          <svg viewBox="0 0 127 23" className="h-[23px] w-full border-t border-[#262c31]" fill="none" stroke="#cfd7da" aria-hidden="true">
            <path d="M0 19L10 18L25 18.500L28 21L40 21L60 22L80 21L92 21L96 19L105 18L116 19L127 18.500" />
          </svg>
          <div className="flex items-center justify-end gap-[4px] border-t border-[#262c31] text-right">
            <Svg w={16} h={12} className="mb-[8px] mr-auto text-[#59636a]"><path d="M4 0h8v12H4zM0 1h3v2H0zM0 5h3v2H0zM0 9h3v2H0zM13 1h3v2h-3zM13 5h3v2h-3zM13 9h3v2h-3z" /></Svg>
            25
            <Svg w={23} h={14} className="text-[#59636a]"><path d="M0 6Q6 0 9 0L11.500 1L14 0Q17 0 23 6Q17 14 11.500 14T0 6ZM5 6q6 5 13 0q-7 -2 -13 0z" fillRule="evenodd" /></Svg>
          </div>
        </div>
      </div>
      <div className="flex gap-[4px] pl-[4px]">
        <ToolButton name="undo" title="Undo" />
        <ToolButton name="cut" title="Edit audio" />
        <ToolButton name="mic" title="Record audio" />
        <ToolButton name="help" title="Help" />
        <ToolButton name="save" title="Save" />
        <ToolButton name="saveNew" title="Render" />
        <ToolButton name="chat" title="Chat" />
        <ToolButton name="download" title="Download" look={TEAL} />
      </div>
      <div className="ml-auto pr-[9px]"><WindowButtons boxed /></div>
    </div>
  );
}

const MENU = ["文件", "编辑", "添加", "样式", "视图", "选项", "工具", "帮助"];

function BottomRow() {
  return (
    <div className="flex h-[59px] items-center">
      <div className={`${GROUP} w-[451px] px-[6px]`}>
        <nav className="flex h-[50px] w-full items-center justify-between border border-[#46595c] bg-[#5c6f70] pl-[6px] pr-[5px] text-[22px] font-medium leading-[30px] text-[#f2fbfb]">
          {MENU.map((item) => <button key={item} className="shrink-0">{item}</button>)}
        </nav>
      </div>
      <div className={`${GROUP} w-[61px] pl-px`}><Knob ring={false} /></div>
      <div className={`${GROUP} w-[294px] pl-[20px]`}>
        <input
          type="range"
          aria-label="Song position"
          min={0}
          max={100}
          defaultValue={18}
          className="h-[26px] w-[258px] appearance-none bg-[linear-gradient(to_right,#a9df52_18%,#6b747b_18%)] bg-[length:100%_6px] bg-center bg-no-repeat [&::-webkit-slider-thumb]:h-[24px] [&::-webkit-slider-thumb]:w-[24px] [&::-webkit-slider-thumb]:appearance-none [&::-webkit-slider-thumb]:rounded-full [&::-webkit-slider-thumb]:bg-[linear-gradient(to_right,transparent_11px,#a9df52_11px,#a9df52_13px,transparent_13px),linear-gradient(#6f787e,#262d32)] [&::-webkit-slider-thumb]:shadow-[0_3px_2px_#343b40]"
        />
      </div>
      <div className={`${GROUP} w-[587px] gap-[4px] pl-[3px]`}>
        <ToolButton name="stepEdit" title="Typing keyboard" look={LIT} />
        <ToolButton name="arrow" title="Auto scroll" />
        <ToolButton name="glide" title="Note glide" />
        <ToolButton name="link" title="Multilink" look={LIT} />
        <ToolButton name="hat" title="Main controls" />
        <Svg w={18} h={22} className="ml-[7px] mt-[8px] text-[#3b444a]"><MagnetShape /></Svg>
        <div className="relative ml-[2px]">
          <label htmlFor="snap" className="sr-only">Snap</label>
          <select id="snap" className="h-[34px] w-[94px] appearance-none rounded-[3px] border-2 border-[#252b2f] bg-[#31383e] pl-[3px] text-[17px] leading-[26px] text-[#cfd6da]">
            <option>线</option>
          </select>
          <Svg w={6} h={12} className="pointer-events-none absolute right-[5px] top-[11px] text-[#767f85]"><path d="M0 0L6 6L0 12Z" /></Svg>
        </div>
        <div className="ml-[10px] flex h-[40px] w-[193px]">
          <button aria-label="Pattern list" className="flex w-[25px] items-center justify-center rounded-l-[3px] border border-[#2d363a] bg-[#485156] text-[#e1e7e9]"><Svg w={6} h={12}><path d="M0 0L6 6L0 12Z" /></Svg></button>
          <label htmlFor="pattern" className="sr-only">Pattern</label>
          <div className="flex w-[143px] items-center bg-linear-to-r from-[#c6d3da] to-[#b4c3cb] pr-[2px]">
            <input id="pattern" defaultValue="样式 2" className="h-[40px] w-full min-w-0 bg-transparent pr-[3px] text-right text-[26px] leading-[38px] text-[#12191d] [font-family:'Roboto_Condensed','Noto_Sans_CJK_SC',sans-serif]" />
            <Spinner />
          </div>
          <button aria-label="Add pattern" className="flex w-[25px] items-center justify-center rounded-r-[3px] border border-[#2d363a] bg-[#485156] text-[#e1e7e9]"><Svg w={12} h={12}><path d="M5 1h2v4h4v2H7v4H5V7H1V5h4z" /></Svg></button>
        </div>
      </div>
      <div className={`${GROUP} w-[494px] gap-[4px] pl-[3px]`}>
        {["playlist", "pianoRoll", "rack", "mixer", "browser", "copy", "plug", "tempoTap", "touch"].map((n) => <ToolButton key={n} name={n} title={n} />)}
        <ToolButton name="cart" title="Shop" look={TEAL} />
      </div>
      <div className={`${GROUP} w-[258px] pl-[4px]`}>
        <button aria-label="News" className="flex h-[50px] w-[247px] items-center justify-end border border-[#42575a] bg-[#526568] pr-[5px] text-[#96a5a8]">
          <Svg w={6} h={10}><path d="M0 0L6 5L0 10Z" /></Svg>
        </button>
      </div>
    </div>
  );
}

/* ------------------------------------------------------------------ */
/* playlist title bar                                                  */
/* ------------------------------------------------------------------ */

const TOOLS: [string, ReactNode, string][] = [
  ["Snap", <g transform="translate(2 0)"><MagnetShape /></g>, "mr-[12px] text-[#7ee7a8]"],
  ["Draw", <path d="M2 2l6 -1l13 13l-2 7l-7 1L2 8zM5 6l10 13M8 3l11 13" fill="none" stroke="currentColor" strokeWidth="2.200" />, "text-[#f9b33c]"],
  ["Paint", <path d="M2 9l5 -8l2 4l4 -2l1 6l-4 1l2 2l4 -2l6 6l0 5l-5 0l-6 -6l-3 4l-1 -4l-4 1l3 -5l-4 1z" />, ""],
  ["Delete", <g fill="none" stroke="currentColor" strokeWidth="2.200"><circle cx="11" cy="11" r="9" /><path d="M5 17L17 5" /></g>, ""],
  ["Mute", <path d="M0 8h4l7 -7v20l-7 -7H0zM14 6l2 0l2 3l2 -3l2 0l-3 5l3 5l-2 0l-2 -3l-2 3l-2 0l3 -5z" />, ""],
  ["Slip", <path d="M0 11l8 -8v5h6V3l8 8l-8 8v-5H8v5z" />, ""],
  ["Slice", <path d="M0 1h6l5 9l0 7zM12 1h7l3 3v17h-3l-6 -5zM15 10a1.500 1.500 0 1 0 3 0a1.500 1.500 0 1 0 -3 0z" fillRule="evenodd" />, ""],
  ["Select", <path d="M2 8V2h6M14 2h6v6M20 14v6h-6M8 20H2v-6" fill="none" stroke="currentColor" strokeWidth="2.200" />, ""],
  ["Zoom", <g fill="none" stroke="currentColor" strokeWidth="2.200"><circle cx="10" cy="9" r="8" /><path d="M16 15l5 6M10 5l-4 5" /></g>, ""],
  ["Playback", <path d="M0 8h4l7 -7v20l-7 -7H0zM14 3h2.500v16H14zM19 3h2.500v16H19z" />, "mr-[12px]"],
  ["Playlist", <path d="M1 7h4l5 -5v18l-5 -5H1zM3 9v4h3l2 2V7L6 9zM14 3l8 8l-8 8z" fillRule="evenodd" />, "text-[#a9e04d]"],
];

function TitleBar() {
  return (
    <header className="flex h-[37px] shrink-0 items-center bg-linear-to-b from-[#454e54] to-[#3f484e] pl-[18px] pr-[5px] text-[#d3d9dc]">
      <button aria-label="Playlist options" className="mr-[18px]"><Svg w={8} h={14}><path d="M0 0L8 7L0 14Z" /></Svg></button>
      <div className="flex gap-[10px]">
        {TOOLS.map(([name, icon, cls]) => (
          <button key={name} aria-label={name} className={cls}><Svg w={22} h={22}>{icon}</Svg></button>
        ))}
      </div>
      <h1 className="ml-[10px] flex items-center gap-[11px] text-[19px] leading-[26px]">
        <span>播放列表 - Arrangement</span>
        <Svg w={6} h={10} className="text-[#79838a]"><path d="M0 0L6 5L0 10Z" /></Svg>
        <span>vocals</span>
        <Svg w={6} h={10} className="text-[#79838a]"><path d="M0 0L6 5L0 10Z" /></Svg>
      </h1>
      <div className="ml-auto"><WindowButtons /></div>
    </header>
  );
}

/* ------------------------------------------------------------------ */
/* pattern picker                                                      */
/* ------------------------------------------------------------------ */

const scatter = (seed: number, count: number, w: number): Note[] => {
  const r = noise(seed);
  return steps(0, count, 1).map(() => {
    const x = Math.round(r() * 34) / 9;
    return [x, x + w, Math.round(r() * 9) * 6, 4];
  });
};

const PATTERNS: { name: string; used?: boolean; notes: Note[] }[] = [
  { name: "样式 1", notes: NOTES_1 },
  { name: "样式 2", used: true, notes: steps(0, 8, 0.5).map((x) => [x, x + 0.25, 52, 5]) },
  { name: "样式 3", used: true, notes: NOTES_3 },
  { name: "样式 4", notes: [[0.5, 1, 52, 5], [1.5, 1.75, 52, 5], [2.5, 3, 52, 5], [3.5, 3.75, 52, 5]] },
  { name: "样式 5", notes: [[0, 4, 40, 4]] },
  { name: "样式 6", notes: NOTES_6 },
  { name: "样式 7", used: true, notes: NOTES_7 },
  { name: "样式 8", notes: scatter(8, 44, 0.06) },
  { name: "样式 9", notes: scatter(9, 80, 0.06) },
  { name: "样式 10", notes: [[1, 2, 1, 4], [0, 1, 8, 4], [1, 2, 46, 4], [0, 1, 54, 4]] },
];

function Picker() {
  return (
    <aside className="flex w-[242px] shrink-0 flex-col border-r border-[#272f35] bg-[#41494f]">
      <div className="flex h-[59px] items-center pl-[23px] pt-[16px]">
        <button aria-label="Patterns" className="text-[#d9dfe2]"><Svg w={24} h={18}><PianoIcon w={24} h={18} /></Svg></button>
        <button aria-label="Audio" className="ml-[43px] text-[#8b959b]"><BurstIcon /></button>
        <button aria-label="Automation" className="ml-[44px] text-[#8b959b]"><LinkDots size={26} /></button>
      </div>
      <div className="mr-[8px] flex min-h-0 flex-1 border-r border-t-2 border-[#293138]">
        <ul className="flex flex-1 flex-col gap-[6px] bg-[#343e46] pl-[6px] pt-[4px]">
          {PATTERNS.map((p, i) => (
            <li key={p.name} className="relative">
              <button className="relative flex h-[40px] w-[200px] items-center rounded-[2px] bg-linear-to-b from-[#4d565b] to-[#454e54] pl-[2px] text-[#d3dade]">
                <svg viewBox={`0 0 60 ${BODY}`} preserveAspectRatio="none" className="absolute inset-0 h-full w-full fill-[#5c666c]" aria-hidden="true">
                  {p.notes.map(([a, b, y, h], n) => <rect key={n} x={a * PX} y={y} width={(b - a) * PX} height={h} />)}
                </svg>
                <span className="relative flex items-center gap-[4px]">
                  <KeysIcon />
                  <span className="text-[20px] leading-[28px] [font-family:'Roboto_Condensed','Noto_Sans_CJK_SC',sans-serif]">{p.name}</span>
                </span>
              </button>
              {p.used && <span className="absolute left-[195px] top-0 h-[40px] w-[6px] bg-[#9fb1bc]" />}
              {i === 1 && (
                <Svg w={13} h={20} className="absolute -left-[4px] top-[10px] text-[#ee3f5f]"><path d="M1 1L12 10L1 19Z" stroke="#20272c" strokeWidth="1.500" /></Svg>
              )}
            </li>
          ))}
        </ul>
        <div className="w-[21px] border-l border-[#293138] bg-[#3b444b]">
          <button aria-label="Scroll patterns" className="flex h-[21px] w-full items-center justify-center border border-[#68737a] bg-[#525b62]"><span className="h-[6px] w-[2px] bg-[#20272c]" /></button>
        </div>
      </div>
      <button aria-label="Add pattern" className="mr-[8px] flex h-[31px] shrink-0 items-center justify-center border-r border-t-2 border-[#2b3339] bg-[#384249] pr-[20px] text-[#cfd6da]">
        <Svg w={11} h={11}><path d="M4.500 0h2v4.500H11v2H6.500V11h-2V6.500H0v-2h4.500z" /></Svg>
      </button>
    </aside>
  );
}

/* ------------------------------------------------------------------ */
/* playlist                                                            */
/* ------------------------------------------------------------------ */

function labelStyle(tone: Tone, label: string) {
  if (tone === "vocal") return "text-[15px] leading-[20px]";
  if (tone === "auto") return `text-[18px] leading-[20px] ${NARROW}`;
  return `text-[16px] leading-[20px] ${NARROW} ${label.startsWith("..") ? "text-[#a3abb5]" : ""}`;
}

function Clip({ at, len, tone, label, icon, faded, body }: ClipData) {
  return (
    <div className="absolute inset-y-0 flex flex-col overflow-hidden" style={{ left: pct(at), width: pct(len) }}>
      <div className={`flex h-[23px] shrink-0 items-center gap-[4px] overflow-hidden rounded-[3px] border pl-px whitespace-nowrap text-[#d6dcdf] ${HEAD[tone]}`}>
        <span className={faded ? "opacity-70" : "text-[#f0f8f4]"}>
          {icon === "keys" && <KeysIcon />}
          {icon === "wave" && <WaveIcon />}
          {icon === "link" && <LinkDots />}
        </span>
        {label && <span className={labelStyle(tone, label)}>{label}</span>}
      </div>
      <div className="mt-px min-h-0 flex-1 bg-[#222c33]/70">{body}</div>
    </div>
  );
}

function TrackHeader({ n }: { n: number }) {
  return (
    <div className="relative h-full w-[160px] rounded-r-[8px] border-t border-[#5a646a] bg-linear-to-b from-[#4b5459] to-[#475055] pl-[2px]">
      <span className="block text-[18px] leading-[22px] text-[#d0d7da]">Track {n}</span>
      <button aria-label={`Track ${n} options`} className="absolute bottom-[5px] left-[20px] flex gap-[3px] p-px">
        <i className="h-[3px] w-[3px] bg-[#323a40]" /><i className="h-[3px] w-[3px] bg-[#323a40]" /><i className="h-[3px] w-[3px] bg-[#323a40]" />
      </button>
      <button aria-label={`Mute track ${n}`} className="absolute bottom-[6px] right-[8px] h-[15px] w-[15px] rounded-full border-2 border-[#2c3a2a] bg-[radial-gradient(#d2ff78,#8fdd33)] outline outline-[#7d878c]" />
    </div>
  );
}

function Overview() {
  const extra: [number, number, number, number, string][] = [
    [1, 8, 24, 2, "#96736f"], [9, 8, 26, 1, "#8b777a"], [26, 8, 24, 2, "#806f6e"], [26, 14, 20, 1, "#96736f"], [34, 16, 26, 1, "#8b777a"],
    [50, 8, 24, 2, "#a06f6b"], [58, 8, 26, 1, "#8b777a"], [66, 7.5, 24, 2, "#a06f6b"], [74, 8, 24, 2, "#a06f6b"], [82, 8, 26, 1, "#8b777a"],
    [90, 8, 24, 2, "#96736f"], [90, 10, 19, 1, "#96736f"], [98, 16, 26, 1, "#8b777a"], [106, 17.5, 19, 1, "#8b706c"], [114, 8.5, 21, 1, "#7a9c9b"],
  ];
  return (
    <svg viewBox={`0 0 ${BARS} 30`} preserveAspectRatio="none" className="h-full w-full" aria-hidden="true">
      {TRACKS.map((t, i) =>
        [...t.clips, ...(t.spikes ?? []).map((s) => ({ at: s.from, len: s.to - s.from }))].map((c, k) => (
          <rect key={`${i}-${k}`} x={c.at} y={1.5 + i * 1.35} width={Math.max(0.1, c.len - 0.08)} height="1.200" fill={t.mini} opacity="0.700" />
        )),
      )}
      {extra.map(([x, w, y, h, fill]) => <rect key={`${x}-${y}`} x={x} y={y} width={w} height={h} fill={fill} />)}
      <rect x="24.700" y="0" width="0.350" height="30" fill="#7fae4a" opacity="0.600" />
      <rect x="25.050" y="0" width="0.120" height="30" fill="#e8fb6a" />
    </svg>
  );
}

const SMALL_BUTTON = "flex shrink-0 items-center justify-center border border-[#656f75] bg-[#50595e] text-[#1d2428]";

function Playlist() {
  return (
    <section className="flex min-w-0 flex-1 flex-col">
      <div className="flex h-[60px] shrink-0">
        <div className="flex w-[167px] shrink-0 bg-[#41494f] [clip-path:polygon(0_100%,0_96%,24px_4px,30px_0,100%_0,100%_100%)]">
          <div className="flex w-full flex-col justify-between border-y border-r border-[#677178] bg-[#50595f] pb-[5px] pr-[4px] pt-[4px]">
            <div className="flex items-center justify-end gap-[12px] pr-[5px] text-[#838d93]">
              <button aria-label="Audio clips" className="text-[#dfe5e8]"><BurstIcon /></button>
              <button aria-label="Automation clips"><LinkDots size={24} /></button>
              <button aria-label="Pattern clips"><Svg w={24} h={18}><PianoIcon w={24} h={18} /></Svg></button>
            </div>
            <div className="flex items-center justify-end gap-[32px] text-[11px] font-bold leading-[16px] text-[#dfe5e8]">
              <label className="flex items-center gap-[3px]">Z 交叉<input type="checkbox" className="h-[16px] w-[16px] appearance-none rounded-[5px] border-2 border-[#a5adb2]" /></label>
              <label className="flex items-center gap-[3px]">拉伸<input type="checkbox" className="h-[16px] w-[16px] appearance-none rounded-[5px] border-2 border-[#a5adb2]" /></label>
            </div>
          </div>
        </div>
        <div className="flex min-w-0 flex-1 flex-col">
          <div className="flex h-[30px]">
            <button aria-label="Scroll left" className={`w-[30px] ${SMALL_BUTTON}`}><Svg w={8} h={14}><path d="M7 1L2 7L7 13" fill="none" stroke="currentColor" strokeWidth="2" /></Svg></button>
            <div className="min-w-0 flex-1 border-y-2 border-[#5d7074] bg-[#4f6064]"><Overview /></div>
            <button aria-label="Scroll right" className={`w-[30px] ${SMALL_BUTTON}`}><Svg w={8} h={14}><path d="M1 1L6 7L1 13" fill="none" stroke="currentColor" strokeWidth="2" /></Svg></button>
            <button aria-label="Zoom" className={`w-[30px] ${SMALL_BUTTON}`}><span className="h-[6px] w-[4px] bg-[#1d2428]" /></button>
          </div>
          <div className="flex h-[30px]">
            <div className={`relative grid min-w-0 flex-1 grid-cols-[repeat(141,minmax(0,1fr))] items-center overflow-hidden border-y border-[#2f3e46] bg-linear-to-b from-[#212d35] to-[#1c262d] text-[17px] leading-[20px] text-[#9eacb3] ${NARROW}`}>
              {steps(1, 36, 4).map((bar) => (
                <span key={bar} className={`w-0 whitespace-nowrap ${bar === 141 ? "col-span-1" : "col-span-4"}`}>{bar}</span>
              ))}
              <Svg w={24} h={18} className="absolute top-0 -ml-[12px] left-[17.800%] text-[#b6f24a]"><path d="M1 1H23L12 16Z" stroke="#17210f" strokeWidth="1.500" /></Svg>
            </div>
            <button aria-label="Scroll up" className={`w-[30px] ${SMALL_BUTTON}`}><Svg w={12} h={10}><path d="M1 8L6 2L11 8" fill="none" stroke="currentColor" strokeWidth="2" /></Svg></button>
          </div>
        </div>
      </div>
      <div className="flex min-h-0 flex-1">
        <div className="relative flex min-w-0 flex-1 flex-col overflow-hidden bg-[#22323b]">
          <div className="absolute inset-y-0 left-[167px] right-0 grid grid-cols-[repeat(141,minmax(0,1fr))]">
            {steps(0, BARS, 1).map((b) => (
              <i key={b} className={`${b % 8 < 4 ? "bg-[#33434d]" : "bg-[#2d3c46]"} ${b % 2 === 0 ? "border-l border-[#182a34]" : ""}`} />
            ))}
          </div>
          <div className="absolute inset-y-0 left-[167px] right-0" aria-hidden="true">
            <div className="h-full border-r-2 border-[#a8f04a] bg-[linear-gradient(to_right,transparent_calc(100%-18px),#5d9438)]" style={{ width: pct(25.15) }} />
          </div>
          {TRACKS.map((t, i) => (
            <div key={i} className={`relative flex shrink-0 ${i === 5 ? "h-[82px]" : "h-[84px]"}`}>
              <TrackHeader n={i + 1} />
              <div className={`ml-px mr-px w-[5px] ${t.marked ? "bg-[#9fb1bc]" : ""}`} />
              <div className="relative min-w-0 flex-1 border-b-2 border-[#152129]">
                {t.spikes?.map((s) => <Spikes key={s.from} {...s} />)}
                {t.clips.map((c) => <Clip key={`${c.at}-${c.tone}`} {...c} />)}
              </div>
            </div>
          ))}
        </div>
        <div className="flex w-[30px] shrink-0 flex-col border-l border-[#272f35] bg-[#3b444b]">
          <button aria-label="Scroll tracks" className="h-[50px] border border-[#68737a] bg-[#525b62]" />
          <button aria-label="Scroll down" className={`mt-auto h-[30px] ${SMALL_BUTTON}`}><Svg w={12} h={10}><path d="M1 2L6 8L11 2" fill="none" stroke="currentColor" strokeWidth="2" /></Svg></button>
        </div>
      </div>
    </section>
  );
}

export default function App() {
  return (
    <div className="flex h-screen flex-col overflow-hidden bg-[#3d464c] [font-family:'Open_Sans','Noto_Sans_CJK_SC',sans-serif]">
      <div className="shrink-0 border-b-2 border-t border-b-[#2b3338] border-t-[#454e55] bg-[#5a636a]">
        <TopRow />
        <BottomRow />
      </div>
      <main className="ml-[11px] flex min-h-0 flex-1 flex-col border-l border-[#2b3338]">
        <TitleBar />
        <div className="flex min-h-0 flex-1">
          <Picker />
          <Playlist />
        </div>
      </main>
    </div>
  );
}
